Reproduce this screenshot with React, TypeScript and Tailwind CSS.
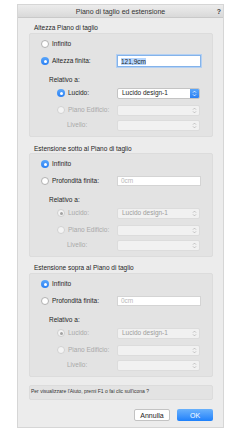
import React from "react";

const font = "font-['Liberation_Sans','Helvetica',sans-serif]";

function Radio({ checked, disabled }: { checked?: boolean; disabled?: boolean }) {
  if (checked && !disabled) {
    return (
      <span className="flex h-[8px] w-[8px] shrink-0 items-center justify-center rounded-full bg-gradient-to-b from-[#5aa6fa] to-[#2a80f4]">
        <span className="h-[3px] w-[3px] rounded-full bg-white" />
      </span>
    );
  }
  if (checked && disabled) {
    return (
      <span className="flex h-[8px] w-[8px] shrink-0 items-center justify-center rounded-full border border-[#cfcfcf] bg-[#f4f4f4]">
        <span className="h-[3px] w-[3px] rounded-full bg-[#a3a3a3]" />
      </span>
    );
  }
  return (
    <span
      className={`h-[8px] w-[8px] shrink-0 rounded-full border ${
        disabled ? "border-[#d2d2d2] bg-[#f4f4f4]" : "border-[#b1b1b1] bg-white"
      }`}
    />
  );
}

function Chevrons({ color }: { color: string }) {
  return (
    <svg width="5" height="7" viewBox="0 0 5 7" fill="none">
      <path d="M1 2.6 L2.5 1.1 L4 2.6" stroke={color} strokeWidth="0.8" />
      <path d="M1 4.4 L2.5 5.9 L4 4.4" stroke={color} strokeWidth="0.8" />
    </svg>
  );
}

function Select({ value, active, disabled }: { value?: string; active?: boolean; disabled?: boolean }) {
  return (
    <div
      className={`flex h-[11px] w-[83px] items-center overflow-hidden rounded-[2px] border ${
        active ? "border-[#c4c4c4] bg-white" : "border-[#dcdcdc] bg-[#f1f1f1]"
      }`}
    >
      <span className={`flex-1 pl-[4px] text-[6.5px] leading-none ${disabled ? "text-[#9c9c9c]" : "text-[#222]"}`}>
        {value}
      </span>
      {active ? (
        <span className="flex h-full w-[9px] items-center justify-center bg-gradient-to-b from-[#5aa6fa] to-[#2a80f4]">
          <Chevrons color="#ffffff" />
        </span>
      ) : (
        <span className="flex h-full w-[9px] items-center justify-center">
          <Chevrons color="#b4b4b4" />
        </span>
      )}
    </div>
  );
}

function Label({ children, disabled }: { children: React.ReactNode; disabled?: boolean }) {
  return (
    <span className={`whitespace-nowrap text-[6.5px] leading-none ${disabled ? "text-[#a9a9a9]" : "text-[#1e1e1e]"}`}>
      {children}
    </span>
  );
}

function RelativeRows({ enabled }: { enabled: boolean }) {
  return (
    <>
      <div className="mt-[6px] flex h-[12px] items-center pl-[19px]">
        <Label>Relativo a:</Label>
      </div>
      <div className="mt-[1px] flex h-[12px] items-center">
        <div className="flex w-[87px] items-center gap-[3px] pl-[27px]">
          <Radio checked disabled={!enabled} />
          <Label disabled={!enabled}>Lucido:</Label>
        </div>
        <Select value="Lucido design-1" active={enabled} disabled={!enabled} />
      </div>
      <div className="mt-[5px] flex h-[12px] items-center">
        <div className="flex w-[87px] items-center gap-[3px] pl-[27px]">
          <Radio disabled />
          <Label disabled>Piano Edificio:</Label>
        </div>
        <Select disabled />
      </div>
      <div className="mt-[3px] flex h-[12px] items-center">
        <div className="flex w-[87px] items-center pl-[37px]">
          <Label disabled>Livello:</Label>
        </div>
        <Select disabled />
      </div>
    </>
  );
}

function GroupBox({ children }: { children: React.ReactNode }) {
  return (
    <div className="rounded-[2px] border border-[#dcdcdc] bg-[#e3e3e3] pb-[5px] pt-[3px]">{children}</div>
  );
}

function SectionTitle({ children, className }: { children: React.ReactNode; className: string }) {
  return (
    <div className={`flex h-[7px] items-center pl-[5px] ${className}`}>
      <Label>{children}</Label>
    </div>
  );
}

function ExtensionBox() {
  return (
    <GroupBox>
      <div className="flex h-[14px] items-center gap-[3px] pl-[11px]">
        <Radio checked />
        <Label>Infinito</Label>
      </div>
      <div className="mt-[3px] flex h-[14px] items-center">
        <div className="flex w-[87px] items-center gap-[3px] pl-[11px]">
          <Radio />
          <Label>Profondità finita:</Label>
        </div>
        <div className="flex h-[10px] w-[84px] items-center border border-[#d4d4d4] bg-white pl-[3px]">
          <span className="text-[6.5px] leading-none text-[#b9b9b9]">0cm</span>
        </div>
      </div>
      <RelativeRows enabled={false} />
    </GroupBox>
  );
}

export default function App() {
  return (
    <div className={`h-[434px] w-[241px] bg-white pl-[18px] pt-[5px] ${font}`}>
      <div className="flex h-[422px] w-[205px] flex-col bg-[#ececec] shadow-[0_0_0_1px_#d6d6d6]">
        {/* title bar */}
        <div className="relative flex h-[13px] items-center justify-center border-b border-[#c9c9c9] bg-gradient-to-b from-[#ececec] to-[#d9d9d9]">
          <span className="text-[7px] leading-none text-[#333]">Piano di taglio ed estensione</span>
          <span className="absolute right-[2px] top-[3px] text-[7px] font-bold leading-none text-[#444]">?</span>
        </div>

        <div className="flex flex-col px-[11px] pr-[10px]">
          <SectionTitle className="mt-[7px]">Altezza Piano di taglio</SectionTitle>
          <div className="mt-[1px]">
            <GroupBox>
              <div className="flex h-[14px] items-center gap-[3px] pl-[11px]">
                <Radio />
                <Label>Infinito</Label>
              </div>
              <div className="mt-[3px] flex h-[14px] items-center">
                <div className="flex w-[87px] items-center gap-[3px] pl-[11px]">
                  <Radio checked />
                  <Label>Altezza finita:</Label>
                </div>
                <div className="flex h-[12px] w-[84px] items-center border border-[#84b3ea] bg-white pl-[3px] shadow-[0_0_0_1px_#b3d0f3]">
                  <span className="bg-[#b5d5fd] text-[6.5px] leading-[7px] text-[#1e1e1e]">121,9cm</span>
                </div>
              </div>
              <RelativeRows enabled />
            </GroupBox>
          </div>

          <SectionTitle className="mt-[9px]">Estensione sotto al Piano di taglio</SectionTitle>
          <ExtensionBox />

          <SectionTitle className="mt-[8px]">Estensione sopra al Piano di taglio</SectionTitle>
          <div className="mt-[1px]">
            <ExtensionBox />
          </div>

          <div className="mt-[8px] h-[15px] whitespace-nowrap rounded-[2px] border border-[#dcdcdc] bg-[#e3e3e3] pl-[1px] pt-[2px] text-[5px] leading-[6px] text-[#333]">
            Per visualizzare l'Aiuto, premi F1 o fai clic sull'icona ?
          </div>

          <div className="mt-[9px] flex justify-end gap-[7px]">
            <button className="flex h-[12px] w-[36px] items-center justify-center rounded-[2px] border border-[#c3c3c3] bg-white text-[7px] leading-none text-[#222]">
              Annulla
            </button>
            <button className="flex h-[12px] w-[36px] items-center justify-center rounded-[2px] bg-gradient-to-b from-[#69b1fb] to-[#1b80fb] text-[7px] leading-none text-white">
              OK
            </button>
          </div>
        </div>
      </div>
    </div>
  );
}
